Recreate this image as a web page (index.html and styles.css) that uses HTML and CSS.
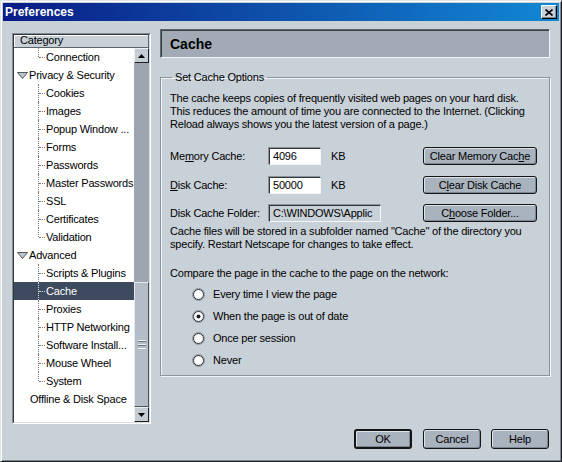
FILE: index.html
```html
<!DOCTYPE html>
<html>
<head>
<meta charset="utf-8">
<title>Preferences</title>
<link rel="stylesheet" href="styles.css">
</head>
<body>
<div class="window">
  <div class="titlebar">
    <span class="title">Preferences</span>
    <div class="close"><svg width="8" height="7" viewBox="0 0 8 7"><path d="M0.5,0.5 L7.5,6.5 M7.5,0.5 L0.5,6.5" stroke="#000" stroke-width="1.6" fill="none"/></svg></div>
  </div>
  <div class="body">
    <div class="tree">
      <div class="tree-inner">
        <div class="tree-head">Category</div>
        <div class="tree-main">
          <ul class="tree-list">
            <li class="row child last">Connection</li>
            <li class="row parent"><svg class="twisty" width="11" height="7" viewBox="0 0 11 7"><polygon points="0.5,0.5 10.5,0.5 5.5,6.5" fill="#bcc4cc" stroke="#505860"/></svg><span>Privacy &amp; Security</span></li>
            <li class="row child">Cookies</li>
            <li class="row child">Images</li>
            <li class="row child">Popup Window ...</li>
            <li class="row child">Forms</li>
            <li class="row child">Passwords</li>
            <li class="row child">Master Passwords</li>
            <li class="row child">SSL</li>
            <li class="row child">Certificates</li>
            <li class="row child last">Validation</li>
            <li class="row parent"><svg class="twisty" width="11" height="7" viewBox="0 0 11 7"><polygon points="0.5,0.5 10.5,0.5 5.5,6.5" fill="#bcc4cc" stroke="#505860"/></svg><span>Advanced</span></li>
            <li class="row child">Scripts &amp; Plugins</li>
            <li class="row child sel">Cache</li>
            <li class="row child">Proxies</li>
            <li class="row child">HTTP Networking</li>
            <li class="row child">Software Install...</li>
            <li class="row child">Mouse Wheel</li>
            <li class="row child last">System</li>
            <li class="row top">Offline &amp; Disk Space</li>
          </ul>
          <div class="sb">
            <div class="sb-btn"><svg width="7" height="4" viewBox="0 0 7 4"><polygon points="3.5,0 7,4 0,4" fill="#000"/></svg></div>
            <div class="sb-track"></div>
            <div class="sb-thumb"><svg width="8" height="9" viewBox="0 0 8 9"><path d="M0,0.5H8M0,4.5H8M0,8.5H8" stroke="#eef1f4"/><path d="M0,1.5H8M0,5.5H8" stroke="#6c757e"/></svg></div>
            <div class="sb-btn"><svg width="7" height="4" viewBox="0 0 7 4"><polygon points="0,0 7,0 3.5,4" fill="#000"/></svg></div>
          </div>
        </div>
      </div>
    </div>
    <div class="panel">
      <div class="panel-head">Cache</div>
      <fieldset class="group">
        <legend>Set Cache Options</legend>
        <p class="intro">The cache keeps copies of frequently visited web pages on your hard disk. This reduces the amount of time you are connected to the Internet. (Clicking Reload always shows you the latest version of a page.)</p>
        <div class="field-row first">
          <span class="label">Me<u>m</u>ory Cache:</span>
          <span class="input">4096</span>
          <span class="unit">KB</span>
          <span class="btn wide"><span>Clear Memory Cac<u>h</u>e</span></span>
        </div>
        <div class="field-row second">
          <span class="label"><u>D</u>isk Cache:</span>
          <span class="input">50000</span>
          <span class="unit">KB</span>
          <span class="btn wide"><span>C<u>l</u>ear Disk Cache</span></span>
        </div>
        <div class="field-row third">
          <span class="label">Disk Cache Folder:</span>
          <span class="input folder">C:\WINDOWS\Applic</span>
          <span class="btn wide"><span>C<u>h</u>oose Folder...</span></span>
        </div>
        <p class="note">Cache files will be stored in a subfolder named "Cache" of the directory you specify. Restart Netscape for changes to take effect.</p>
        <p class="compare">Compare the page in the cache to the page on the network:</p>
        <div class="radios">
          <div class="radio"><svg width="13" height="13" viewBox="0 0 13 13"><circle cx="6.5" cy="6.5" r="6" fill="#dfe4e9" stroke="#8a939c"/><circle cx="6.5" cy="6.5" r="5" fill="#fff" stroke="#2a2e33"/></svg><span>Every time I view the page</span></div>
          <div class="radio"><svg width="13" height="13" viewBox="0 0 13 13"><circle cx="6.5" cy="6.5" r="6" fill="#dfe4e9" stroke="#8a939c"/><circle cx="6.5" cy="6.5" r="5" fill="#fff" stroke="#2a2e33"/><circle cx="6.5" cy="6.5" r="2" fill="#1a1d21"/></svg><span>When the page is out of date</span></div>
          <div class="radio"><svg width="13" height="13" viewBox="0 0 13 13"><circle cx="6.5" cy="6.5" r="6" fill="#dfe4e9" stroke="#8a939c"/><circle cx="6.5" cy="6.5" r="5" fill="#fff" stroke="#2a2e33"/></svg><span>Once per session</span></div>
          <div class="radio"><svg width="13" height="13" viewBox="0 0 13 13"><circle cx="6.5" cy="6.5" r="6" fill="#dfe4e9" stroke="#8a939c"/><circle cx="6.5" cy="6.5" r="5" fill="#fff" stroke="#2a2e33"/></svg><span>Never</span></div>
        </div>
      </fieldset>
    </div>
  </div>
  <div class="footer">
    <span class="btn foot default"><span>OK</span></span>
    <span class="btn foot cancel"><span>Cancel</span></span>
    <span class="btn foot help"><span>Help</span></span>
  </div>
</div>
</body>
</html>
```
FILE: styles.css
```css
html, body {
  margin: 0;
  padding: 0;
  background: #c8d0d8;
}
body {
  font-family: "Liberation Sans", Arial, sans-serif;
  font-size: 11px;
  letter-spacing: -0.2px;
  color: #000;
}
.window {
  width: 562px;
  height: 462px;
  box-sizing: border-box;
  border: 1px solid;
  border-color: #e2e6ea #1c2024 #1c2024 #e2e6ea;
  box-shadow: inset 1px 1px #ffffff, inset -1px -1px #7e868e;
  padding: 2px;
  display: flex;
  flex-direction: column;
  background: #c8d0d8;
}
.titlebar {
  height: 18px;
  flex: none;
  display: flex;
  align-items: center;
  justify-content: space-between;
  padding: 0 2px 0 2px;
  background: linear-gradient(to right, #0a1c86, #1288d2);
  color: #fff;
  font-weight: bold;
  font-size: 12px;
  letter-spacing: 0;
}
.close {
  width: 16px;
  height: 14px;
  box-sizing: border-box;
  background: #c8d0d8;
  border: 1px solid;
  border-color: #ffffff #000000 #000000 #ffffff;
  box-shadow: inset -1px -1px #808890;
  display: flex;
  align-items: center;
  justify-content: center;
}
.body {
  height: 403px;
  flex: none;
  box-sizing: border-box;
  padding: 8px 0 0 9px;
  display: flex;
  align-items: flex-start;
}
.tree {
  margin-top: 4px;
  width: 139px;
  height: 391px;
  box-sizing: border-box;
  border: 1px solid;
  border-color: #858d96 #ffffff #ffffff #858d96;
}
.tree-inner {
  height: 100%;
  box-sizing: border-box;
  border: 1px solid;
  border-color: #33373c #d8dde2 #d8dde2 #33373c;
  display: flex;
  flex-direction: column;
  background: #fff;
}
.tree-head {
  height: 13px;
  flex: none;
  box-sizing: border-box;
  background: #c8d0d8;
  border-right: 1px solid #5a626a;
  border-bottom: 1px solid #5a626a;
  box-shadow: inset 1px 1px #ffffff;
  padding-left: 6px;
  line-height: 11px;
}
.tree-main {
  flex: 1;
  display: flex;
}
.tree-list {
  flex: 1;
  list-style: none;
  margin: 0;
  padding: 0;
  overflow: hidden;
}
.row {
  height: 18px;
  line-height: 18px;
  position: relative;
  white-space: nowrap;
}
.row.parent {
  display: flex;
  align-items: center;
  padding-left: 3px;
}
.twisty {
  margin-right: 1px;
}
.row.child {
  padding-left: 32px;
}
.row.top {
  padding-left: 16px;
}
.row.child::before {
  content: "";
  position: absolute;
  left: 24px;
  top: 0;
  bottom: 0;
  border-left: 1px dotted #7a7a7a;
}
.row.child.last::before {
  bottom: 9px;
}
.row.child::after {
  content: "";
  position: absolute;
  left: 25px;
  top: 9px;
  width: 6px;
  border-top: 1px dotted #7a7a7a;
}
.row.sel {
  background: #3e4a5e;
  color: #fff;
}
.row.sel::before,
.row.sel::after {
  border-color: #d8dce0;
}
.sb {
  width: 15px;
  flex: none;
  display: flex;
  flex-direction: column;
  background: #9da6b0;
}
.sb-btn {
  height: 15px;
  flex: none;
  box-sizing: border-box;
  background: #c4ccd4;
  border: 1px solid;
  border-color: #eef1f4 #1c1f22 #1c1f22 #eef1f4;
  display: flex;
  align-items: center;
  justify-content: center;
}
.sb-track {
  flex: 1;
}
.sb-thumb {
  height: 125px;
  flex: none;
  box-sizing: border-box;
  background: #b4bdc7;
  border: 1px solid;
  border-color: #e4e8ec #4a525a #4a525a #e4e8ec;
  display: flex;
  align-items: center;
  justify-content: center;
}
.panel {
  margin-left: 9px;
  width: 390px;
}
.panel-head {
  height: 29px;
  box-sizing: border-box;
  background: #a2abb5;
  border: 1px solid;
  border-color: #5c646c #f4f6f8 #f4f6f8 #5c646c;
  box-shadow: inset 1px 1px #3a4148;
  font-weight: bold;
  font-size: 14px;
  letter-spacing: 0;
  padding-left: 9px;
  display: flex;
  align-items: center;
}
.group {
  margin: 13px 0 0;
  padding: 0 12px 4px 9px;
  border: 1px solid #8c949c;
  box-shadow: inset 1px 1px #f0f3f6, 1px 1px #f0f3f6;
  min-width: 0;
}
.group legend {
  padding: 0 3px;
  margin-left: 2px;
  line-height: 12px;
}
.intro {
  margin: 9px 0 0;
  line-height: 13px;
}
.field-row {
  display: flex;
  align-items: center;
  height: 18px;
}
.field-row.first { margin-top: 16px; }
.field-row.second { margin-top: 11px; }
.field-row.third { margin-top: 10px; }
.label {
  width: 99px;
  flex: none;
}
.input {
  width: 52px;
  height: 17px;
  box-sizing: border-box;
  flex: none;
  background: #fff;
  border: 1px solid;
  border-color: #33373c #f4f6f8 #f4f6f8 #33373c;
  box-shadow: -1px -1px #8a929a;
  padding-left: 3px;
  line-height: 15px;
  white-space: nowrap;
  overflow: hidden;
}
.input.folder {
  width: 112px;
  background: #c8d0d8;
}
.unit {
  margin-left: 10px;
}
.btn {
  display: flex;
  align-items: center;
  justify-content: center;
  box-sizing: border-box;
  background: #a9b3be;
  border: 1px solid #121416;
  border-radius: 3px;
  box-shadow: inset 1px 1px #dde3e9, inset -1px -1px #7d8791;
  white-space: nowrap;
}
.btn.wide {
  width: 114px;
  height: 18px;
  margin-left: auto;
}
.note {
  margin: 3px 0 0;
  line-height: 13px;
}
.compare {
  margin: 16px 0 0;
  line-height: 13px;
}
.radios {
  margin-top: 3px;
}
.radio {
  height: 22px;
  display: flex;
  align-items: center;
  padding-left: 22px;
}
.radio svg {
  margin-right: 8px;
  flex: none;
}
.footer {
  display: flex;
  justify-content: flex-end;
  padding: 5px 10px 0 0;
}
.btn.foot {
  width: 58px;
  height: 20px;
}
.btn.default {
  border-width: 2px;
}
.btn.cancel {
  margin-left: 11px;
}
.btn.help {
  margin-left: 10px;
}
```
